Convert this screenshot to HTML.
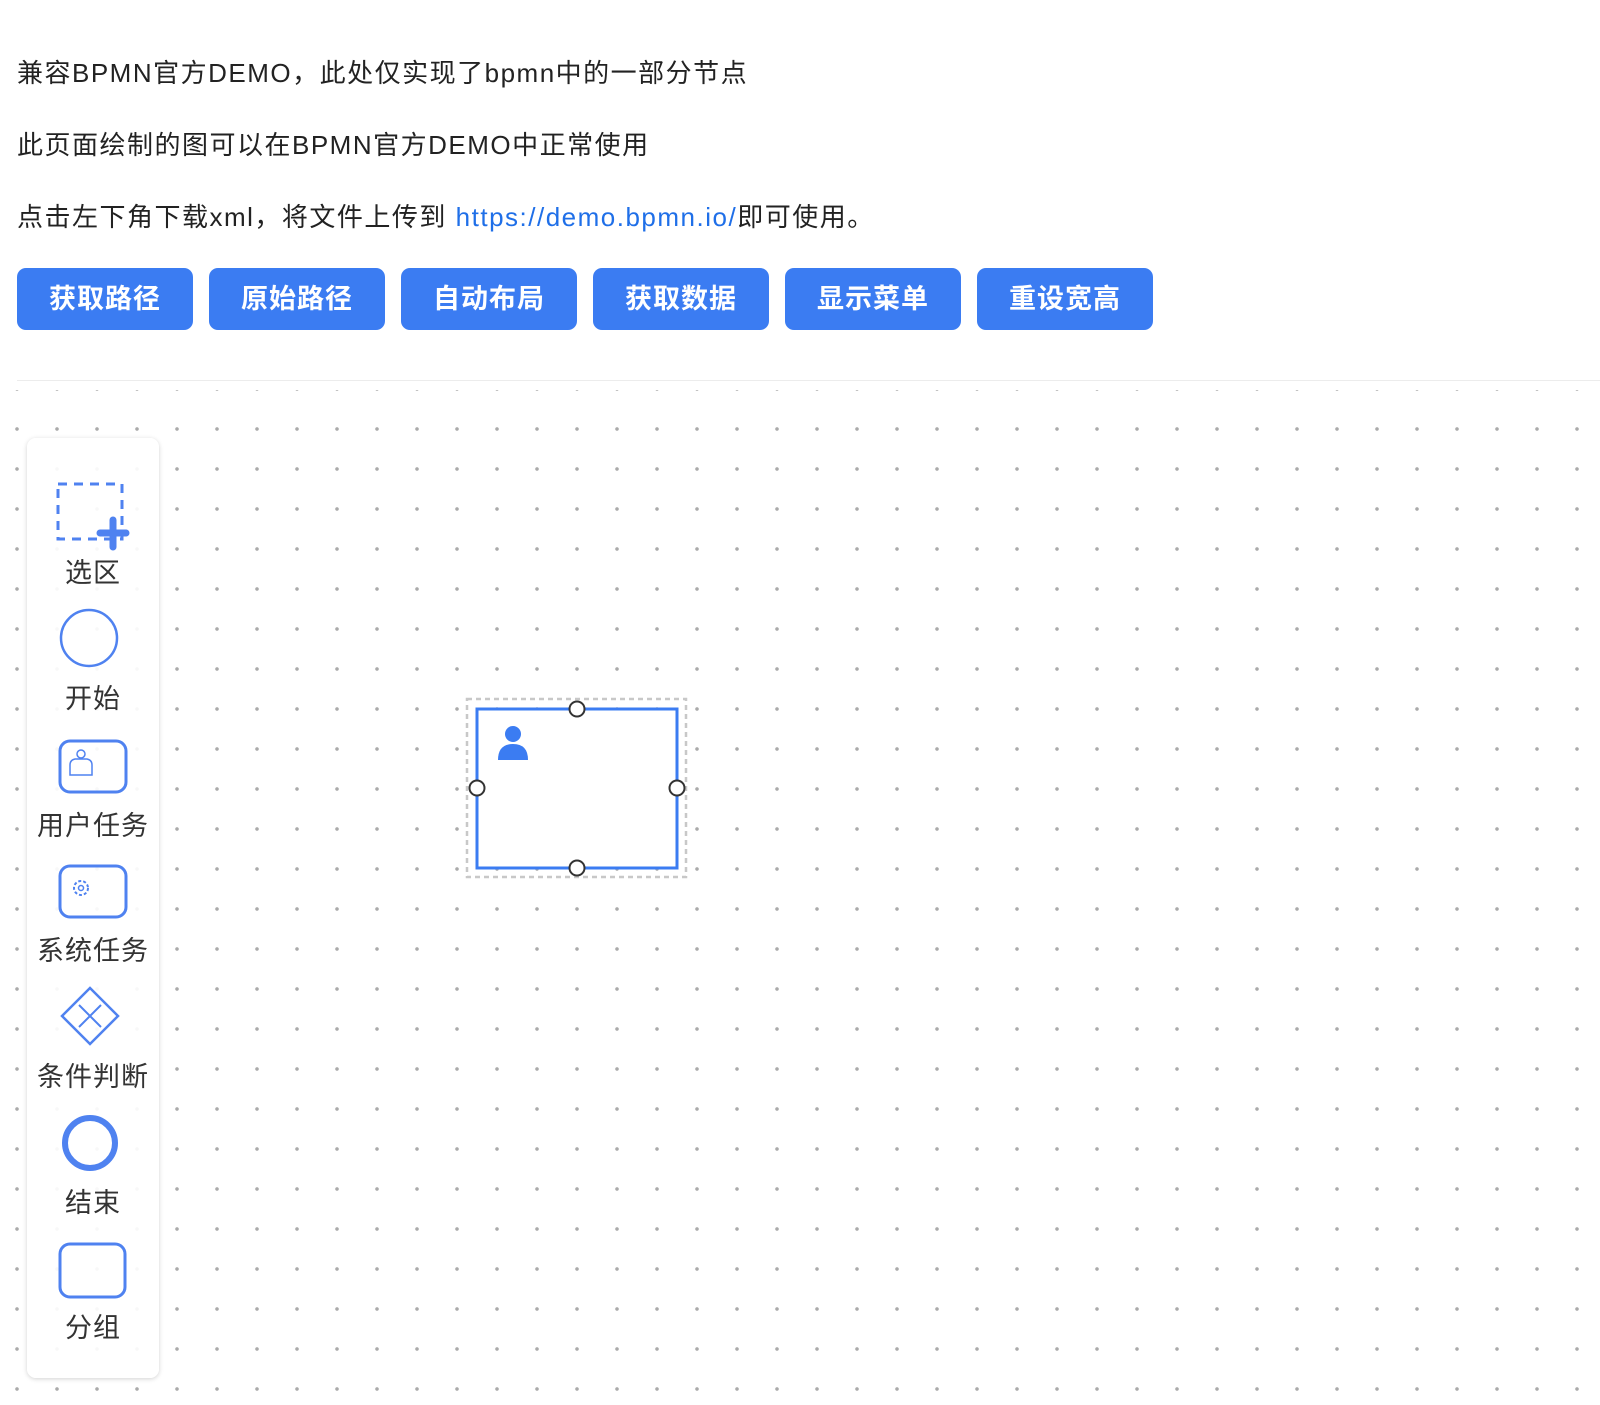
<!DOCTYPE html>
<html><head><meta charset="utf-8"><style>
body{margin:0;width:1600px;height:1405px;background:#fff;font-family:"Liberation Sans","Noto Sans CJK SC",sans-serif;color:#222;position:relative;overflow:hidden}
.t{position:absolute;left:17px;font-size:26px;line-height:30px;white-space:nowrap;letter-spacing:1.5px}
.t a{color:#1f6fe8;text-decoration:none}
.btn{position:absolute;top:268px;width:176px;height:62px;border-radius:9px;background:#3b7cf2;color:#fff;font-size:27px;line-height:62px;text-align:center;font-weight:bold;letter-spacing:1px}
.hr{position:absolute;left:17px;right:0;top:380px;height:1px;background:#ececec}
.grid{position:absolute;left:0;top:390px;width:1600px;height:1015px;background-image:radial-gradient(circle,#aaa 1.6px,transparent 2px);background-size:40px 40px;background-position:-3px -21px}
.panel{position:absolute;left:27px;top:438px;width:132px;height:940px;background:rgba(255,255,255,0.92);border-radius:9px;box-shadow:0 1px 5px rgba(0,0,0,0.18)}
.lb{position:absolute;left:27px;width:132px;text-align:center;font-size:27px;line-height:30px;color:#333;letter-spacing:1px}
svg{position:absolute;left:0;top:0}
</style></head><body>
<div class="t" style="top:58px">兼容BPMN官方DEMO，此处仅实现了bpmn中的一部分节点</div>
<div class="t" style="top:130px">此页面绘制的图可以在BPMN官方DEMO中正常使用</div>
<div class="t" style="top:202px">点击左下角下载xml，将文件上传到 <a>https://demo.bpmn.io/</a>即可使用。</div>
<div class="btn" style="left:17px">获取路径</div>
<div class="btn" style="left:209px">原始路径</div>
<div class="btn" style="left:401px">自动布局</div>
<div class="btn" style="left:593px">获取数据</div>
<div class="btn" style="left:785px">显示菜单</div>
<div class="btn" style="left:977px">重设宽高</div>
<div class="hr"></div>
<div class="grid"></div>
<div class="panel"></div>
<div class="lb" style="top:558px">选区</div>
<div class="lb" style="top:684px">开始</div>
<div class="lb" style="top:811px">用户任务</div>
<div class="lb" style="top:936px">系统任务</div>
<div class="lb" style="top:1062px">条件判断</div>
<div class="lb" style="top:1188px">结束</div>
<div class="lb" style="top:1313px">分组</div>
<svg width="1600" height="1405">
<g fill="none" stroke="#4f82f0">
<rect x="58" y="484" width="64" height="55" stroke-width="3" stroke-dasharray="9,7"/>
<path d="M100 533h26M113 520v27" stroke-width="7" stroke-linecap="round"/>
<circle cx="89" cy="638" r="28" stroke-width="2.5"/>
<rect x="60" y="741" width="66" height="51" rx="10" stroke-width="3"/>
<circle cx="81" cy="754" r="4" stroke-width="1.5"/>
<path d="M70 775v-10q0-5 5-6h12q5 1 5 6v10z" stroke-width="1.5"/>
<rect x="60" y="866" width="66" height="51" rx="10" stroke-width="3"/>
<circle cx="81" cy="888" r="7" stroke-width="2" stroke-dasharray="3,2"/>
<circle cx="81" cy="888" r="2.5" stroke-width="1.5"/>
<path d="M90 988l28 28l-28 28l-28-28z" stroke-width="2.5"/>
<path d="M79 1005l22 22M101 1005l-22 22" stroke-width="2"/>
<circle cx="90" cy="1143" r="25" stroke-width="6"/>
<rect x="60" y="1244" width="65" height="53" rx="10" stroke-width="3"/>
</g>
<rect x="467" y="699" width="219" height="178" fill="none" stroke="#c8c8c8" stroke-width="2.5" stroke-dasharray="5,4"/>
<rect x="477" y="709" width="200" height="159" fill="#fff" stroke="#3b7cf2" stroke-width="3"/>
<circle cx="513" cy="734" r="8" fill="#3b7cf2"/>
<path d="M498 760q0-16 15-16q15 0 15 16z" fill="#3b7cf2"/>
<g fill="#fff" stroke="#333" stroke-width="2">
<circle cx="577" cy="709" r="7.5"/>
<circle cx="577" cy="868" r="7.5"/>
<circle cx="477" cy="788" r="7.5"/>
<circle cx="677" cy="788" r="7.5"/>
</g>
</svg>
</body></html>
